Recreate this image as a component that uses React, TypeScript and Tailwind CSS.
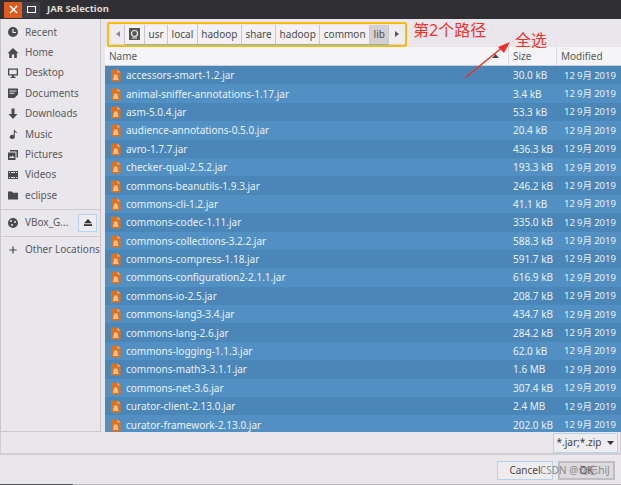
const font = { fontFamily: '"Noto Sans","Noto Sans CJK SC",sans-serif' };

const files: [string, string][] = [
  ["accessors-smart-1.2.jar", "30.0 kB"],
  ["animal-sniffer-annotations-1.17.jar", "3.4 kB"],
  ["asm-5.0.4.jar", "53.3 kB"],
  ["audience-annotations-0.5.0.jar", "20.4 kB"],
  ["avro-1.7.7.jar", "436.3 kB"],
  ["checker-qual-2.5.2.jar", "193.3 kB"],
  ["commons-beanutils-1.9.3.jar", "246.2 kB"],
  ["commons-cli-1.2.jar", "41.1 kB"],
  ["commons-codec-1.11.jar", "335.0 kB"],
  ["commons-collections-3.2.2.jar", "588.3 kB"],
  ["commons-compress-1.18.jar", "591.7 kB"],
  ["commons-configuration2-2.1.1.jar", "616.9 kB"],
  ["commons-io-2.5.jar", "208.7 kB"],
  ["commons-lang3-3.4.jar", "434.7 kB"],
  ["commons-lang-2.6.jar", "284.2 kB"],
  ["commons-logging-1.1.3.jar", "62.0 kB"],
  ["commons-math3-3.1.1.jar", "1.6 MB"],
  ["commons-net-3.6.jar", "307.4 kB"],
  ["curator-client-2.13.0.jar", "2.4 MB"],
  ["curator-framework-2.13.0.jar", "202.0 kB"],
];

const I = ({ d }: { d: string }) => (
  <svg width="12" height="12" viewBox="0 0 12 12" fill="#4a4a4a" className="shrink-0"><path d={d} /></svg>
);

const places: [string, string][] = [
  ["Recent", "M6 1a5 5 0 1 0 0 10A5 5 0 0 0 6 1zm-.6 2h1.2v3H9v1.1H5.4z"],
  ["Home", "M6 1 0.5 6.2h1.7V11h2.6V7.6h2.4V11h2.6V6.2h1.7z"],
  ["Desktop", "M1 1.5h10v7H7v1.2h1.5V11h-5V9.7H5V8.5H1zm1.3 1.2v4.5h7.4V2.700z"],
  ["Documents", "M1 1.500h10v6L7.500 11H1zm1.500 2v1h7v-1zm0 2.200v1h5v-1z"],
  ["Downloads", "M4.500 0.500h3v5.500H10.500L6 11 1.500 6H4.500z"],
  ["Music", "M7 1c.4 2 3 2.500 3.500 4.500C9.500 4.500 8.500 4.300 7.800 4.200V9a2.500 2 0 1 1-1.200-1.700z"],
  ["Pictures", "M3 1h8v7.500H9.500V2.500H3zM1 3.500h7.500V11H1zm1 5.500h5.500L5.800 6.500 4.300 8 3.500 7.300z"],
  ["Videos", "M1 2h10v8H1zm1 1v1h1V3zm2 0v1h4V3zm5 0v1h1V3zM2 8v1h1V8zm2 0v1h4V8zm5 0v1h1V8z"],
  ["eclipse", "M1 2.500h4l1 1.200h5V10.500H1z"],
];

function JarIcon() {
  return (
    <svg width="11" height="13" viewBox="0 0 11 13" className="shrink-0">
      <path d="M1 0.500H7.500L10.500 3.500V12.500H1z" fill="#e0701a" />
      <path d="M7.500 0.500 10.500 3.500H7.500z" fill="#f4b27a" />
      <path d="M4.200 5.500h3L8.500 11H3z" fill="#f2c08f" />
    </svg>
  );
}

function Crumb({ label, active }: { label: string; active?: boolean }) {
  return (
    <div
      className={`flex h-[20px] items-center border-r border-b border-r-[#c9c6cc] border-b-[#7fb0d8] px-[3.500px] text-[10px] text-[#4d4d4d] ${active ? "bg-[#d2d0d3]" : "bg-[#f3f1f4]"}`}
    >
      {label}
    </div>
  );
}

export default function App() {
  return (
    <div className="relative flex h-[485px] w-[621px] flex-col overflow-hidden bg-[#e9e6ec]" style={font}>
      {/* title bar */}
      <div className="flex h-[19px] shrink-0 items-center bg-[#302f34]">
        <div className="ml-[4px] flex h-[16px] w-[18px] items-center justify-center bg-[#df5a20] text-white">
          <svg width="9" height="9" viewBox="0 0 9 9" stroke="#fff" strokeWidth="1.600"><path d="M1 1l7 7M8 1 1 8" /></svg>
        </div>
        <div className="flex h-[16px] w-[18px] items-center justify-center bg-[#3f3e44]">
          <div className="h-[7px] w-[9px] border border-white" />
        </div>
        <span className="ml-[7px] text-[9.500px] font-bold text-[#dfdbd2]">JAR Selection</span>
      </div>

      <div className="flex h-[413px] shrink-0">
        {/* sidebar */}
        <div className="flex h-full w-[101px] shrink-0 flex-col border-x border-b border-[#c9c6cc] bg-[#e9e6ec] pt-[3px] text-[10px] text-[#5a5a5a]">
          {places.map(([n, d]) => (
            <div key={n} className="flex h-[20.400px] items-center gap-[6px] pl-[6px]">
              <I d={d} />
              <span>{n}</span>
            </div>
          ))}
          <div className="mt-[3px] h-px bg-[#cfccd2]" />
          <div className="flex h-[26px] items-center gap-[6px] pl-[6px]">
            <I d="M6 1a5 5 0 1 0 0 10A5 5 0 0 0 6 1zM4 3a1 1 0 1 1 0 2 1 1 0 0 1 0-2zm4 1a1 1 0 1 1 0 2 1 1 0 0 1 0-2zM5 7a1 1 0 1 1 0 2 1 1 0 0 1 0-2z" />
            <span className="w-[47px] shrink-0">VBox_G...</span>
            <div className="flex h-[18px] w-[19px] items-center justify-center border border-[#b5d3ee] bg-[#eeecef]">
              <svg width="8" height="7" viewBox="0 0 8 7" fill="#333"><path d="M4 0 8 4.200H0zM0 5.200h8V7H0z" /></svg>
            </div>
          </div>
          <div className="h-px bg-[#cfccd2]" />
          <div className="flex h-[26px] items-center gap-[6px] whitespace-nowrap pl-[6px]">
            <svg width="12" height="12" viewBox="0 0 12 12" fill="#4a4a4a" className="shrink-0"><path d="M5.400 2.500h1.200v3h3v1.100h-3v3H5.400v-3h-3V5.500h3z" /></svg>
            <span>Other Locations</span>
          </div>
        </div>

        {/* main */}
        <div className="ml-[4px] flex min-w-0 flex-1 flex-col">
          <div className="ml-[2px] mt-[3px] flex h-[25px] w-[300px] shrink-0 items-center rounded-[2px] border-2 border-[#fbb90d] pl-[2px]">
            <div className="flex h-[20px] w-[14px] items-center justify-center border-r border-b border-r-[#c9c6cc] border-b-[#d5d3d8] bg-[#eeecef]">
              <svg width="4" height="6" viewBox="0 0 4 6" fill="#888"><path d="M4 0v6L0 3z" /></svg>
            </div>
            <div className="flex h-[20px] w-[20px] items-center justify-center border-r border-b border-r-[#c9c6cc] border-b-[#7fb0d8] bg-[#f3f1f4]">
              <svg width="11" height="12" viewBox="0 0 11 12"><rect width="11" height="12" fill="#565656" /><circle cx="5.500" cy="5.500" r="3" fill="none" stroke="#eee" strokeWidth="1.200" /><path d="M3 10h5" stroke="#eee" /></svg>
            </div>
            <Crumb label="usr" />
            <Crumb label="local" />
            <Crumb label="hadoop" />
            <Crumb label="share" />
            <Crumb label="hadoop" />
            <Crumb label="common" />
            <Crumb label="lib" active />
            <div className="flex h-[20px] flex-1 items-center justify-center border-b border-b-[#d5d3d8] bg-[#eeecef]">
              <svg width="4" height="6" viewBox="0 0 4 6" fill="#555"><path d="M0 0v6l4-3z" /></svg>
            </div>
          </div>

          {/* header */}
          <div className="flex h-[19px] shrink-0 items-center border-b border-[#cfccd2] bg-[#f5f4f6] text-[10px] text-[#5a5a5a]">
            <div className="flex h-full w-[404px] items-center justify-between border-r border-[#dddbe0] pl-[4px] pr-[9px]">
              <span>Name</span>
              <svg width="7" height="4" viewBox="0 0 7 4" fill="#444"><path d="M3.500 0 7 4H0z" /></svg>
            </div>
            <div className="flex h-full w-[48px] items-center border-r border-[#dddbe0] pl-[4px]">Size</div>
            <div className="pl-[4px]">Modified</div>
          </div>

          {/* rows */}
          <div className="min-h-0 flex-1 overflow-hidden bg-[#4a86b8] text-[10px] text-[#e8f0f6]">
            {files.map(([n, s], i) => (
              <div key={n} className={`flex h-[18.400px] items-center pt-[1px] ${i % 2 ? "bg-[#5290c3]" : "bg-[#4a86b8]"}`}>
                <div className="flex w-[404px] items-center gap-[5px] pl-[5px]">
                  <JarIcon />
                  <span className="whitespace-nowrap">{n}</span>
                </div>
                <div className="w-[48px] pl-[4px]">{s}</div>
                <div className="whitespace-nowrap pl-[7px] text-[9.500px] [word-spacing:-0.300px]">12 9月 2019</div>
              </div>
            ))}
          </div>
        </div>
      </div>

      {/* filter bar */}
      <div className="flex h-[23px] shrink-0 items-center justify-end border-x border-b-2 border-[#d0cdd3] pr-[2px]">
        <div className="flex h-[20px] w-[65px] items-center justify-center gap-[6px] border border-[#b5d3ee] bg-[#eeecef] text-[10px] text-[#3f3f3f]">
          *.jar;*.zip
          <svg width="7" height="4" viewBox="0 0 7 4" fill="#333"><path d="M0 0h7L3.500 4z" /></svg>
        </div>
      </div>

      {/* action bar */}
      <div className="flex flex-1 items-start justify-end gap-[5px] pr-[6px] pt-[6px] text-[10px] text-[#4a4a4a]">
        <div className="flex h-[19px] w-[56px] items-center justify-center border border-[#b5d3ee] bg-[#eeecef]">Cancel</div>
        <div className="flex h-[19px] w-[57px] items-center justify-center border-2 border-[#c0bdc3] bg-[#dcdadd]">OK</div>
      </div>
      <div className="h-px w-full shrink-0 bg-[#bcbac0]">
        <div className="h-px w-[73px] bg-[#55545a]" />
      </div>

      {/* annotations */}
      <span className="absolute left-[413px] top-[20px] text-[16px] leading-[20px] text-[#f4332c]">第2个路径</span>
      <span className="absolute left-[515px] top-[30px] text-[16px] leading-[20px] text-[#f4332c]">全选</span>
      <svg className="absolute left-[460px] top-[38px]" width="54" height="44" viewBox="0 0 54 44">
        <path d="M5 40 44 8" stroke="#ef2f28" strokeWidth="1.500" />
        <path d="M50 4 38 9 44 15z" fill="#ef2f28" />
      </svg>
      <span className="absolute left-[540px] top-[462px] text-[10px] leading-[17px] text-[#8a898f]">CSDN @勿忘hiJ</span>
    </div>
  );
}
